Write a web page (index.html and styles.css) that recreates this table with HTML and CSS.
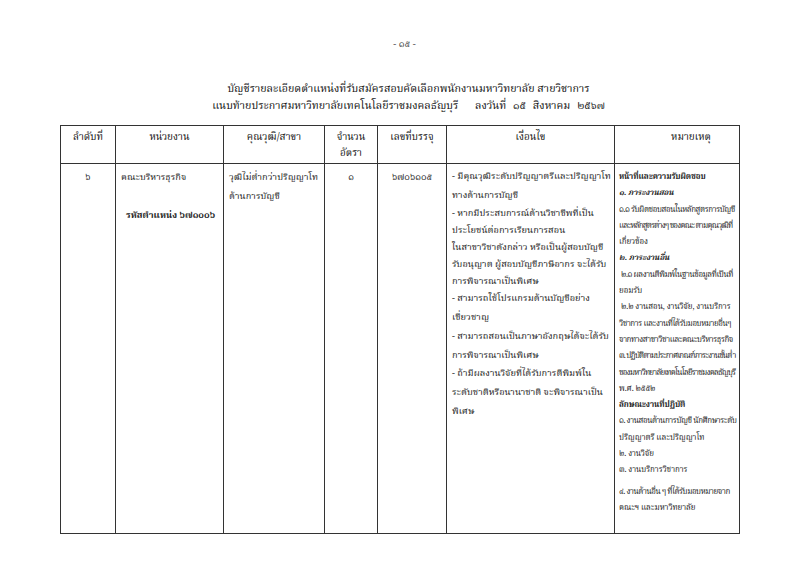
FILE: index.html
```html
<!DOCTYPE html>
<html lang="th">
<head>
<meta charset="utf-8">
<link rel="stylesheet" href="styles.css">
</head>
<body>
<div class="page">
  <div class="pageno">- ๑๕ -</div>
  <div class="title">
    <div>บัญชีรายละเอียดตำแหน่งที่รับสมัครสอบคัดเลือกพนักงานมหาวิทยาลัย สายวิชาการ</div>
    <div>แนบท้ายประกาศมหาวิทยาลัยเทคโนโลยีราชมงคลธัญบุรี <span class="sp"></span>ลงวันที่ <span class="sp2"></span>๑๕ <span class="sp2"></span>สิงหาคม <span class="sp2"></span>๒๕๖๗</div>
  </div>
  <table class="grid">
    <colgroup>
      <col class="c1"><col class="c2"><col class="c3"><col class="c4"><col class="c5"><col class="c6"><col class="c7">
    </colgroup>
    <thead>
      <tr>
        <th>ลำดับที่</th>
        <th>หน่วยงาน</th>
        <th>คุณวุฒิ/สาขา</th>
        <th>จำนวน<br>อัตรา</th>
        <th>เลขที่บรรจุ</th>
        <th>เงื่อนไข</th>
        <th class="hnote">หมายเหตุ</th>
      </tr>
    </thead>
    <tbody>
      <tr>
        <td class="center">๖</td>
        <td>
          <div>คณะบริหารธุรกิจ</div>
          <div class="code">รหัสตำแหน่ง ๖๗๑๐๐๖</div>
        </td>
        <td>
          <div>วุฒิไม่ต่ำกว่าปริญญาโท</div>
          <div>ด้านการบัญชี</div>
        </td>
        <td class="center">๑</td>
        <td class="center">๖๗๐๖๑๐๕</td>
        <td class="cond">
          <p class="l19">- มีคุณวุฒิระดับปริญญาตรีและปริญญาโท<br>ทางด้านการบัญชี</p>
          <p class="l17">- หากมีประสบการณ์ด้านวิชาชีพที่เป็น<br>ประโยชน์ต่อการเรียนการสอน</p>
          <p class="l17">ในสาขาวิชาดังกล่าว หรือเป็นผู้สอบบัญชี<br>รับอนุญาต ผู้สอบบัญชีภาษีอากร จะได้รับ<br>การพิจารณาเป็นพิเศษ</p>
          <p class="l19">- สามารถใช้โปรแกรมด้านบัญชีอย่าง<br>เชี่ยวชาญ</p>
          <p class="l19">- สามารถสอนเป็นภาษาอังกฤษได้จะได้รับ<br>การพิจารณาเป็นพิเศษ</p>
          <p class="l19">- ถ้ามีผลงานวิจัยที่ได้รับการตีพิมพ์ใน<br>ระดับชาติหรือนานาชาติ จะพิจารณาเป็น<br>พิเศษ</p>
        </td>
        <td class="note">
          <p class="b">หน้าที่และความรับผิดชอบ</p>
          <p class="bi">๑. ภาระงานสอน</p>
          <p><span class="tight">๑.๑ รับผิดชอบสอนในหลักสูตรการบัญชี</span><br><span class="tighter">และหลักสูตรต่างๆ ของคณะ ตามคุณวุฒิที่</span><br>เกี่ยวข้อง</p>
          <p class="bi">๒. ภาระงานอื่น</p>
          <p>&nbsp;<span class="tight">๒.๑ ผลงานตีพิมพ์ในฐานข้อมูลที่เป็นที่</span><br>ยอมรับ</p>
          <p>&nbsp;๒.๒ งานสอน, งานวิจัย, งานบริการ<br><span class="tight">วิชาการ และงานที่ได้รับมอบหมายอื่นๆ</span><br><span class="tight">จากทางสาขาวิชาและคณะบริหารธุรกิจ</span></p>
          <p><span class="tighter">๓. ปฏิบัติตามประกาศเกณฑ์ภาระงานขั้นต่ำ</span><br><span class="tighter">ของมหาวิทยาลัยเทคโนโลยีราชมงคลธัญบุรี</span><br>พ.ศ. ๒๕๕๒</p>
          <p class="b">ลักษณะงานที่ปฏิบัติ</p>
          <p><span class="tight">๑. งานสอนด้านการบัญชี นักศึกษาระดับ</span><br>ปริญญาตรี และปริญญาโท</p>
          <p>๒. งานวิจัย</p>
          <p>๓. งานบริการวิชาการ</p>
          <p class="gap"><span class="tight">๔. งานด้านอื่น ๆ ที่ได้รับมอบหมายจาก</span><br>คณะฯ และมหาวิทยาลัย</p>
        </td>
      </tr>
    </tbody>
  </table>
</div>
</body>
</html>
```

FILE: styles.css
```css
html, body {
  margin: 0;
  padding: 0;
  background: #ffffff;
}
body {
  font-family: "Noto Serif Thai", "Noto Sans Thai", serif;
  color: #222;
  font-size: 9.3px;
}
.page {
  width: 800px;
  height: 566px;
  box-sizing: border-box;
  padding: 38px 61px 0 60px;
}
.pageno {
  text-align: center;
  font-size: 9.5px;
  line-height: 14px;
  color: #444;
  padding-left: 10px;
}
.title {
  margin-top: 29px;
  text-align: center;
  font-size: 10.7px;
  line-height: 17px;
  color: #111;
  padding-left: 18px;
}
.sp { display: inline-block; width: 14px; }
.sp2 { display: inline-block; width: 4px; }
.grid {
  margin-top: 10px;
  width: 679px;
  border-collapse: collapse;
  table-layout: fixed;
}
.c1 { width: 55px; }
.c2 { width: 108px; }
.c3 { width: 101px; }
.c4 { width: 53px; }
.c5 { width: 69px; }
.c6 { width: 168px; }
.c7 { width: 125px; }
.grid th, .grid td {
  border: 1px solid #333;
  vertical-align: top;
  overflow: hidden;
}
.grid th {
  font-weight: normal;
  font-size: 10px;
  line-height: 16px;
  height: 37px;
  box-sizing: border-box;
  padding: 3px 2px 2px;
  text-align: center;
  color: #111;
}
.grid th.hnote {
  padding-left: 30px;
}
.grid td {
  height: 364px;
  padding: 4px 5px 0 5px;
  line-height: 19px;
  white-space: nowrap;
}
.center { text-align: center; }
.code {
  font-weight: bold;
  margin-top: 19px;
  padding-left: 5px;
}
.cond p, .note p { margin: 0; }
.cond .l19 { line-height: 18.7px; }
.cond .l17 { line-height: 17px; }
.grid td.note {
  line-height: 16.3px;
  font-size: 8px;
  letter-spacing: -0.1px;
  padding: 5px 0 0 4px;
}
.note .tight { letter-spacing: -0.45px; }
.note .tighter { letter-spacing: -0.8px; }
.note .b { font-weight: bold; }
.note .bi { font-weight: bold; font-style: italic; }
.note .gap { margin-top: 5px; }
```
